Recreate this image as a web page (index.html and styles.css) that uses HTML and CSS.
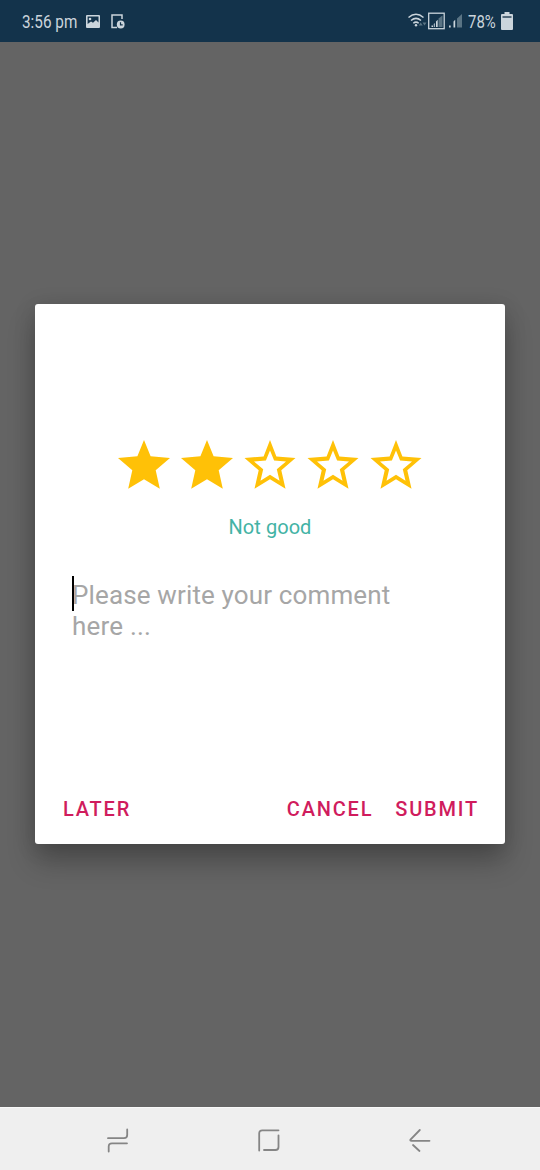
FILE: index.html
```
<!DOCTYPE html>
<html lang="en">
<head>
<meta charset="utf-8">
<title>Rate</title>
<link rel="stylesheet" href="styles.css">
</head>
<body>
<div class="screen">
  <header class="status">
    <span class="clock">3:56 pm</span>
    <svg class="ic-picture" width="14" height="13" viewBox="0 0 14 13"><path fill="currentColor" fill-rule="evenodd" d="M1 0h12q1 0 1 1v11q0 1-1 1H1q-1 0-1-1V1q0-1 1-1zM1.600 1.500v7.500L5 6.500l2 1.300L10 5l2.500 2.500v-6z"/><circle cx="4" cy="4" r="1.300" fill="currentColor"/></svg>
    <svg class="ic-device" width="14" height="15" viewBox="0 0 14 15"><path d="M11 5V1H1v12.500h5" fill="none" stroke="currentColor" stroke-width="1.500"/><circle cx="9.700" cy="10.500" r="3.900" fill="currentColor"/><path d="M9.500 8.300v2.500h2.200" fill="none" stroke="#13334b" stroke-width="1.200"/></svg>
    <span class="spacer"></span>
    <svg class="ic-signals" width="55" height="18" viewBox="0 0 55 18">
      <g fill="none" stroke="currentColor" stroke-width="1.500"><path d="M.5 5.500q7.500-6.500 15 0M3 8.500q5-4.300 10 0M5.300 11.300q2.700-2.400 5.400 0"/></g>
      <circle cx="8" cy="13.300" r="1.200" fill="currentColor"/>
      <path class="dim" d="M10.700 13.500l2-3 2 3zM14.500 10.500l2 3 2-3z"/>
      <rect x="20.700" y="1.200" width="15.500" height="15.500" fill="none" stroke="currentColor" stroke-width="1.300"/>
      <path class="dim" d="M30.500 6.500L34.500 3.500V15h-4z"/><path fill="currentColor" d="M23.500 13.500H25V15h-1.500zM28 9.500l1.700-1.700V15H28z"/><path class="mid" d="M25.700 12l1.300-1v4h-1.300z"/>
      <path class="dim" d="M49 6.500L54 2v13.500h-5z"/><path fill="currentColor" d="M41 13.500h1.700v2H41zM45.500 9.500l1.700-1.700v7.700h-1.700z"/>
    </svg>
    <span class="percent">78%</span>
    <svg class="ic-battery" width="12" height="18" viewBox="0 0 12 18"><path fill="currentColor" d="M3.500 0h5v2H11q1 0 1 1v14q0 1-1 1H1q-1 0-1-1V3q0-1 1-1h2.500z"/><path fill="#53697a" d="M1.500 4h9v2h-9z"/></svg>
  </header>
  <main class="backdrop">
    <section class="dialog">
      <div class="stars">
        <svg class="star" viewBox="0 0 63 50"><use href="#full"/></svg>
        <svg class="star" viewBox="0 0 63 50"><use href="#full"/></svg>
        <svg class="star" viewBox="0 0 63 50"><use href="#empty"/></svg>
        <svg class="star" viewBox="0 0 63 50"><use href="#empty"/></svg>
        <svg class="star" viewBox="0 0 63 50"><use href="#empty"/></svg>
      </div>
      <div class="verdict"><span>Not good</span></div>
      <div class="comment"><i class="caret"></i><span class="line one">Please write your comment</span><span class="line two">here ...</span></div>
      <div class="actions">
        <span class="btn later">LATER</span>
        <span class="btn cancel">CANCEL</span>
        <span class="btn submit">SUBMIT</span>
      </div>
    </section>
  </main>
  <footer class="nav">
    <svg width="22" height="25" viewBox="0 0 22 25"><path d="M1 10.200h16q3.200 0 3.200-3.200V1.500M20 15.300H5q-3.300 0-3.300 3.300v4.900"/></svg>
    <svg width="22" height="25" viewBox="0 0 22 25"><path d="M1.200 22.500v-17q0-3.200 3.200-3.200H20.500M20.500 7.300V19q0 3-3 3H6"/></svg>
    <svg width="22" height="25" viewBox="0 0 22 25"><path d="M10.800 2L1.500 11.500q-.8 1.300 1 1.300H20.500M4 17l6.500 6"/></svg>
  </footer>
</div>
<svg class="defs" width="0" height="0">
  <defs>
    <path id="full" fill="#ffc107" d="M31 0L37.600 16.300 57 18 42.700 30.300 46.800 48.700 31 39.200 15.200 48.700 19.300 30.300 5 18 24.400 16.300z"/>
    <path id="empty" fill="#ffc107" fill-rule="evenodd" d="M31 0L37.400 16.400 56.500 18 42.300 30.300 46.500 48.700 31 39.200 15.500 48.700 19.700 30.300 5.500 18 24.600 16.400zM31 10.500L26.900 20.400 15 21.400 24.200 29.200 21.500 40.700 31 34.700 40.500 40.700 37.800 29.200 47 21.400 35.100 20.400z"/>
  </defs>
</svg>
</body>
</html>
```
FILE: styles.css
```
body { margin: 0; font-family: Roboto, "Liberation Sans", sans-serif; }
.defs { display: block; }
.screen { width: 540px; height: 1170px; display: flex; flex-direction: column; overflow: hidden; }
.status { height: 42px; box-sizing: border-box; background: #13334b; color: #cbd5dc; display: flex; align-items: center; padding: 0 27px 0 22px; font-size: 18px; }
.status svg { flex: none; }
.clock { width: 55px; white-space: nowrap; transform: scaleX(.85); transform-origin: left; padding-top: 1px; }
.ic-picture { margin-left: 9px; }
.ic-device { margin-left: 11px; }
.spacer { flex: 1; }
.dim { fill: #5a7484; }
.mid { fill: #9eafba; }
.percent { width: 28px; margin: 1px 5px 0 5px; transform: scaleX(.83); transform-origin: left; }
.backdrop { flex: 1; background: #646464; display: flex; justify-content: center; align-items: flex-start; padding-top: 262px; box-sizing: border-box; }
.dialog { width: 470px; height: 540px; background: #fff; border-radius: 3px; box-shadow: 0 18px 28px rgba(0,0,0,.24), 0 3px 22px rgba(0,0,0,.14); display: flex; flex-direction: column; }
.stars { display: flex; justify-content: center; margin-top: 135.500px; height: 50px; }
.star { width: 63px; height: 50px; }
.verdict { margin-top: 24.500px; text-align: center; color: #43b3a5; font-size: 20px; line-height: 26px; letter-spacing: .05px; }
.comment { position: relative; margin: 40px 37px 0; font-size: 26px; line-height: 31px; color: #a6a6a6; }
.line { display: block; white-space: nowrap; }
.one { letter-spacing: .14px; }
.two { letter-spacing: .2px; }
.caret { position: absolute; left: 0; top: -4px; width: 1.500px; height: 35px; background: #000; }
.actions { margin-top: auto; display: flex; padding: 0 26px 23px 28px; font-size: 20px; line-height: 24px; font-weight: 500; letter-spacing: 1.800px; color: #d01c5d; }
.later { margin-right: auto; }
.cancel { margin-right: 22px; }
.nav { height: 63px; background: #efefef; border-top: 1px solid #f8f8f8; box-sizing: border-box; display: flex; justify-content: space-between; align-items: center; padding: 2px 109px 0 107px; }
.nav path { fill: none; stroke: #858585; stroke-width: 1.800; stroke-linecap: round; }
```
